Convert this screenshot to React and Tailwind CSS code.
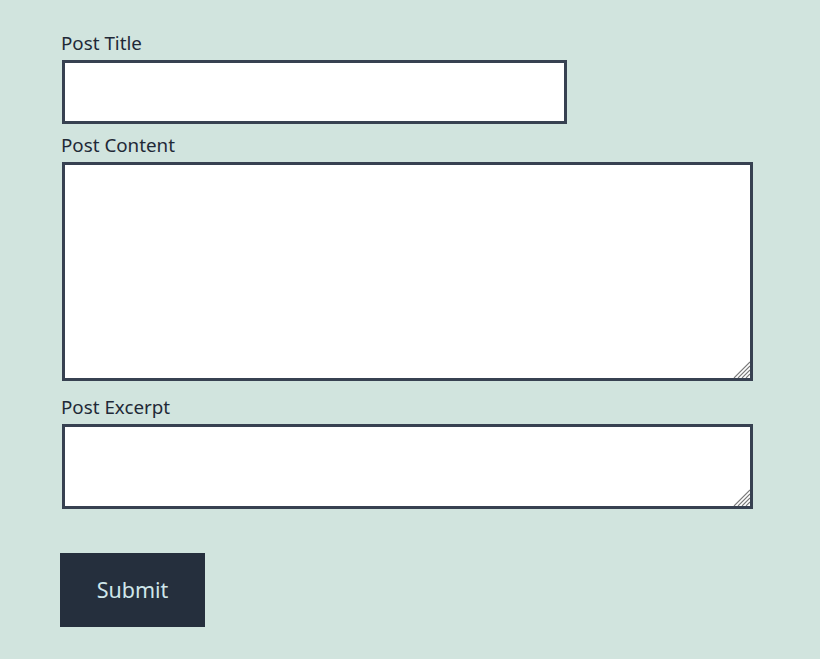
const Grip = () => (
	<svg
		className="pointer-events-none absolute bottom-[3px] right-[3px] bg-white"
		width="18"
		height="18"
		viewBox="0 0 18 18">
		<g stroke="#777777" strokeWidth="1.1">
			<line x1="2" y1="18" x2="18" y2="2" />
			<line x1="6" y1="18" x2="18" y2="6" />
			<line x1="10" y1="18" x2="18" y2="10" />
			<line x1="14" y1="18" x2="18" y2="14" />
		</g>
	</svg>
);

export default function App() {
	return (
		<div className="min-h-[659px] w-full bg-[#d1e4de] pl-[60px] pt-[30px] text-[#1f2937] font-['Noto_Sans',sans-serif]">
			<form className="flex flex-col" onSubmit={(e) => e.preventDefault()}>
				<label className="block text-[18.8px] leading-[26px] pl-[1px] mb-[4px]">Post Title</label>
				<input
					type="text"
					className="block ml-[2px] h-[64px] w-[505px] border-[3px] border-[#374151] bg-white outline-none"
				/>
				<label className="block text-[18.8px] leading-[26px] pl-[1px] mt-[8px] mb-[4px]">Post Content</label>
				<div className="relative ml-[2px] h-[219px] w-[691px]">
					<textarea className="block h-full w-full border-[3px] border-[#374151] bg-white outline-none" />
					<Grip />
				</div>
				<label className="block text-[18.8px] leading-[26px] pl-[1px] mt-[13px] mb-[4px]">Post Excerpt</label>
				<div className="relative ml-[2px] h-[85px] w-[691px]">
					<textarea className="block h-full w-full border-[3px] border-[#374151] bg-white outline-none" />
					<Grip />
				</div>
				<button
					type="submit"
					className="mt-[44px] h-[74px] w-[145px] bg-[#252f3d] text-[21.5px] text-[#cfe6ea]"
				>
					Submit
				</button>
			</form>
		</div>
	);
}
